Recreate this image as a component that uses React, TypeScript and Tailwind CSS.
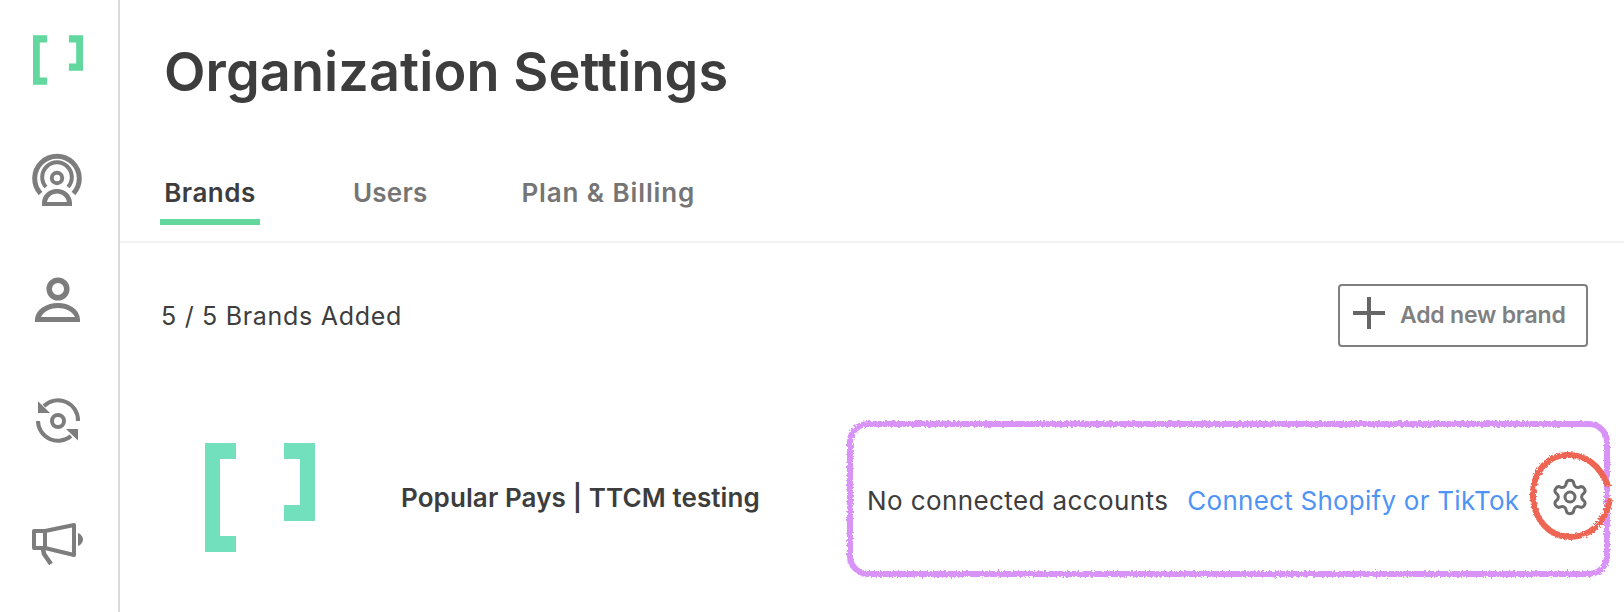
import React from "react";
import { Settings } from "lucide-react";

const Bracket = ({ w, h, className }: { w: number; h: number; className?: string }) => (
  <svg width={w} height={h} viewBox="0 0 110 109" className={className} fill="currentColor">
    <path d="M0 0H31V16H15V93H31V109H0Z" />
    <path d="M79 0H110V78H79V62H95V16H79Z" />
  </svg>
);

const NavIcons = () => (
  <div className="flex flex-col items-start text-[#7d7d7d]">
    <svg width="52" height="54" viewBox="32 153 52 54" className="ml-[32px] mt-[68px]" fill="none" stroke="currentColor">
      <path d="M40.5 193.5A22.3 22.3 0 1 1 73.5 193.5" strokeWidth="5" />
      <path d="M46 187A14.8 14.8 0 1 1 68 187" strokeWidth="4" />
      <circle cx="57" cy="178" r="5.2" strokeWidth="4" />
      <path fillRule="evenodd" stroke="none" fill="currentColor" d="M42 206V203C42 195 49 189 57 189S72 195 72 203V206ZM47 202H67C66 197 62 193.500 57 193.500S48 197 47 202Z" />
    </svg>
    <svg width="50" height="52" viewBox="33 275 50 52" className="ml-[33px] mt-[68px]" fill="none" stroke="currentColor">
      <circle cx="58" cy="289" r="8.800" strokeWidth="5.500" />
      <path fillRule="evenodd" stroke="none" fill="currentColor" d="M35 322V319C36 309 47 303 58 303S79 309 80 319V322ZM41 317H75C72 311 65 308 58 308S44 311 41 317Z" />
    </svg>
    <svg width="50" height="50" viewBox="33 395 50 50" className="ml-[33px] mt-[69px]" fill="none" stroke="currentColor">
      <path d="M44 405A20 20 0 0 1 78 420" strokeWidth="4" />
      <path d="M38 420A20 20 0 0 0 71 435" strokeWidth="4" />
      <path d="M38 400.300V412H50Z" fill="currentColor" stroke="none" />
      <path d="M78 428V439.500L66 428Z" fill="currentColor" stroke="none" />
      <circle cx="58" cy="420" r="6" strokeWidth="4" />
    </svg>
    <svg width="54" height="46" viewBox="31 521 54 46" className="ml-[31px] mt-[76px]" fill="none" stroke="currentColor" strokeLinejoin="round">
      <path d="M45 530L74 524V554L45 547H34V530Z" strokeWidth="4" />
      <path d="M45 530V547" strokeWidth="4" />
      <path d="M43 548L44 553L51 563" strokeWidth="4.500" />
      <path d="M78 532C81 533 83 536 83 538.500S81 544 78 545Z" fill="currentColor" stroke="none" />
    </svg>
  </div>
);

const Annotations = () => (
  <svg className="absolute left-0 top-0 pointer-events-none" width="1624" height="612" fill="none">
    <defs>
      <filter id="rough" x="-5%" y="-5%" width="110%" height="110%">
        <feTurbulence type="fractalNoise" baseFrequency="0.45" numOctaves="2" seed="4" />
        <feDisplacementMap in="SourceGraphic" scale="4.500" />
      </filter>
    </defs>
    <rect x="850" y="424" width="757" height="150" rx="18" stroke="#d992f8" strokeWidth="6" filter="url(#rough)" />
    <path d="M1608 486C1600 465 1585 454 1566 455C1545 456 1532 475 1533 497C1534 520 1550 537 1570 537C1590 537 1606 522 1610 499" stroke="#ee6553" strokeWidth="6" filter="url(#rough)" />
  </svg>
);

export default function App() {
  return (
    <div className="relative flex h-[612px] w-[1624px] overflow-hidden bg-white text-[#3d3d3d] font-['Inter','Liberation_Sans',sans-serif]">
      <aside className="flex h-full w-[120px] shrink-0 flex-col border-r-2 border-[#d9d9d9]">
        <Bracket w={50} h={50} className="ml-[33px] mt-[35px] text-[#62d89e]" />
        <NavIcons />
      </aside>
      <main className="min-w-0 flex-1">
        <header className="h-[243px] border-b-2 border-[#f3f3f3]">
          <h1 className="pl-[44px] pt-[36px] text-[54px] font-semibold leading-[72px] tracking-[0.1px] whitespace-nowrap">Organization Settings</h1>
          <nav className="mt-[47px] flex pl-[40px] text-[26px] font-semibold leading-[36px]">
            <div className="flex h-[70px] w-[100px] justify-center border-b-[6px] border-[#62d89e] pt-[20px] tracking-[0.5px]">Brands</div>
            <div className="ml-[93px] pt-[20px] tracking-[0.2px] text-[#757575]">Users</div>
            <div className="ml-[94px] pt-[20px] tracking-[0.9px] text-[#757575]">Plan &amp; Billing</div>
          </nav>
        </header>
        <section className="flex items-center justify-between pl-[41px] pr-[36px] pt-[41px]">
          <span className="text-[25px] leading-[34px] tracking-[0.7px]">5 / 5 Brands Added</span>
          <button className="flex h-[63px] w-[250px] items-center rounded-[4px] border-2 border-[#808080] pl-[13px] text-[23px] font-semibold text-[#808080]">
            <svg width="32" height="32" viewBox="0 0 32 32" fill="#666666" className="mb-[5px] shrink-0">
              <path d="M14 0H18V14H32V18H18V32H14V18H0V14H14Z" />
            </svg>
            <span className="ml-[15px] whitespace-nowrap tracking-[-0.2px]">Add new brand</span>
          </button>
        </section>
        <section className="mt-[96px] flex items-center pl-[85px]">
          <Bracket w={110} h={109} className="text-[#72e0bc]" />
          <span className="ml-[86px] w-[466px] whitespace-nowrap text-[26px] font-semibold tracking-[0.1px]">Popular Pays | TTCM testing</span>
          <span className="mt-[6px] whitespace-nowrap text-[26px] tracking-[0.4px]">No connected accounts</span>
          <a className="ml-[19px] mt-[6px] whitespace-nowrap text-[26px] tracking-[0.25px] text-[#4f94f5]">Connect Shopify or TikTok</a>
          <Settings size={40} strokeWidth={1.800} className="mb-[2px] ml-[31px] text-[#6b6b6b]" />
        </section>
      </main>
      <Annotations />
    </div>
  );
}
